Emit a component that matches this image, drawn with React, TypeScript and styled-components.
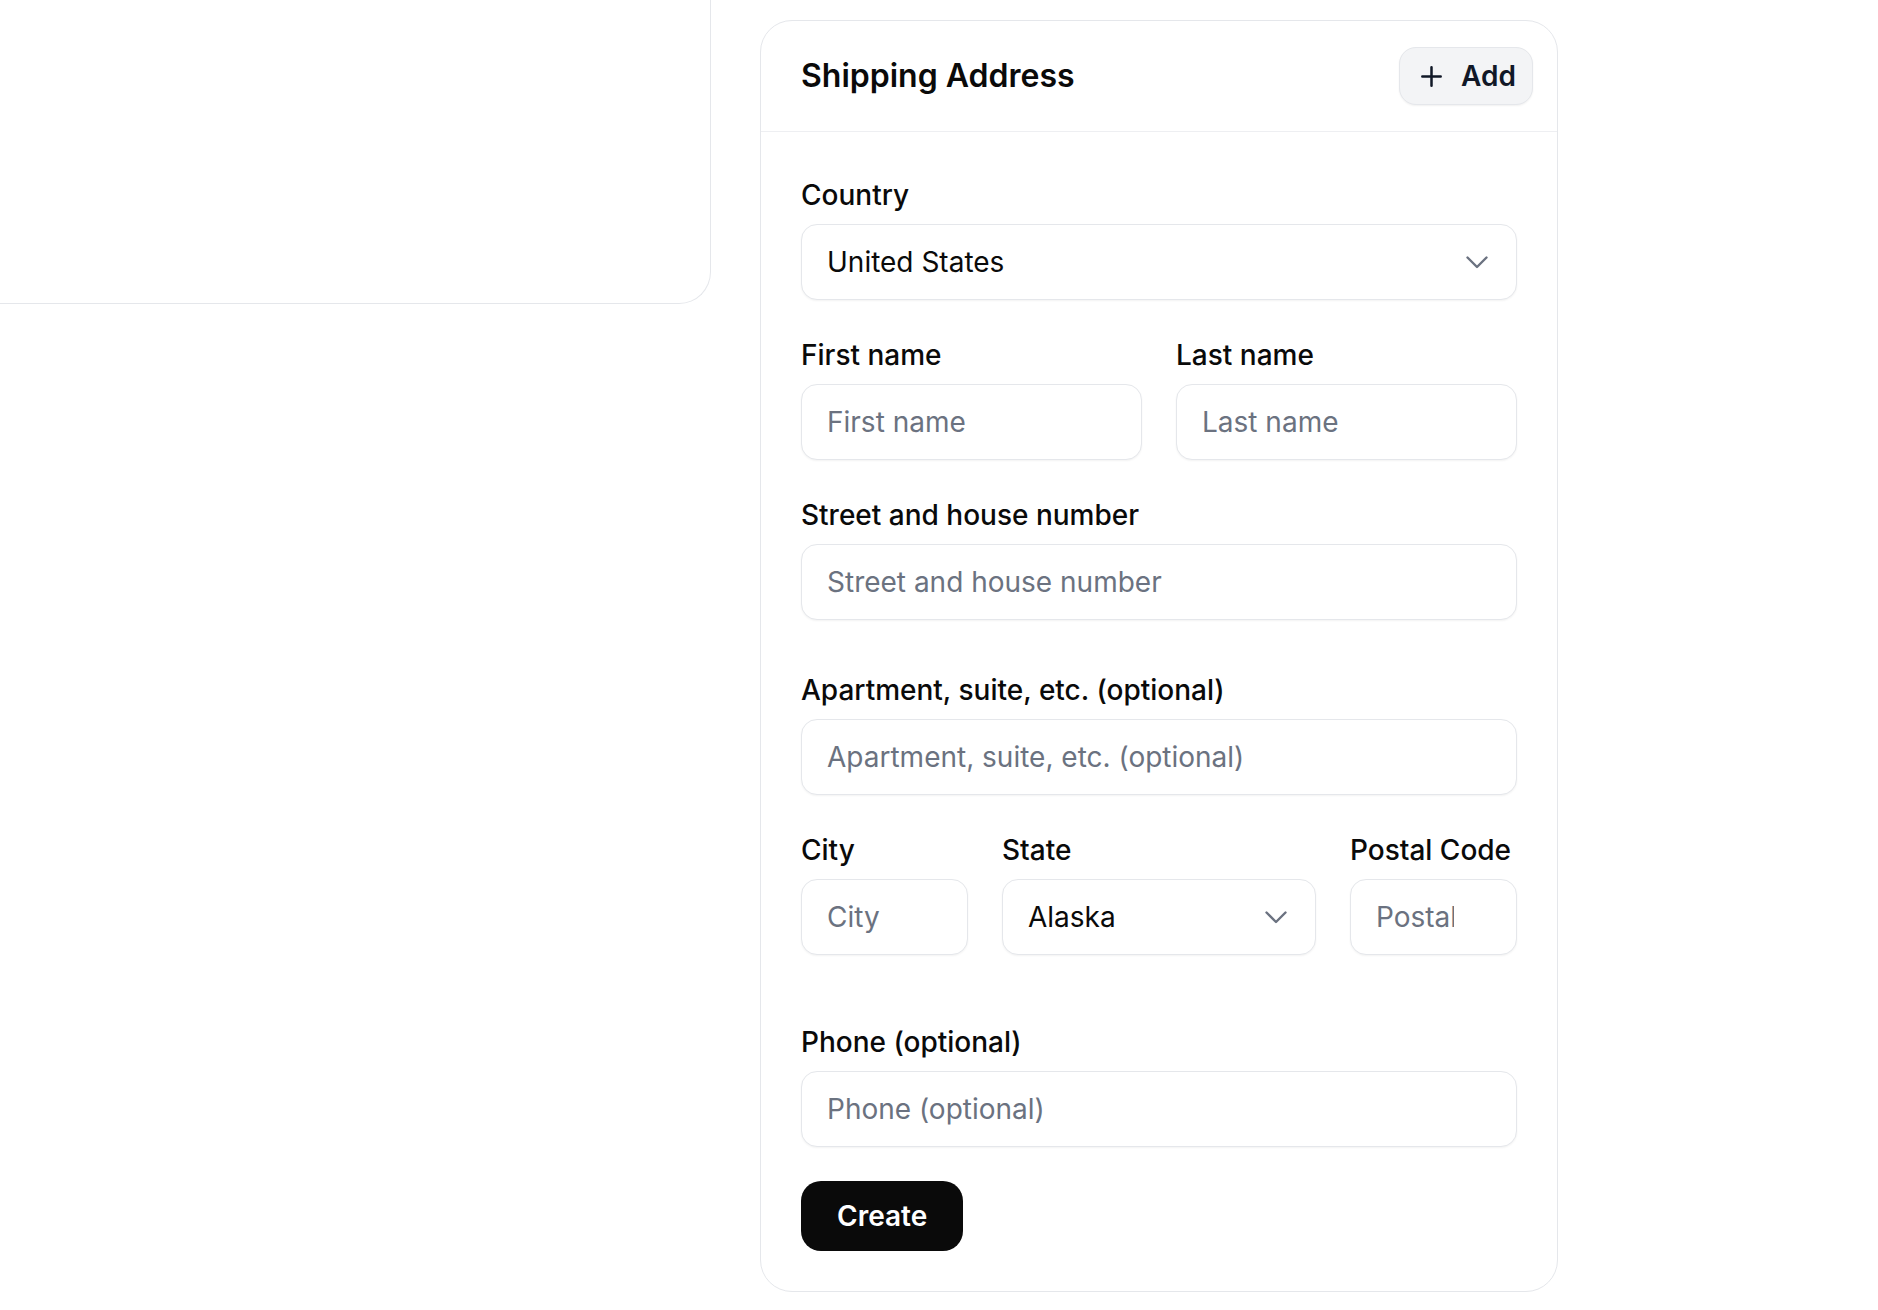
import React from "react";
import styled, { createGlobalStyle } from "styled-components";

const GlobalStyle = createGlobalStyle`
  html, body {
    margin: 0;
    padding: 0;
    background: #ffffff;
  }
  body {
    font-family: "Inter", "Noto Sans", "Liberation Sans", sans-serif;
    color: #0a0a0a;
  }
  * { box-sizing: border-box; }
`;

const Page = styled.div`
  display: flex;
  align-items: flex-start;
  gap: 49px;
  width: 1878px;
  min-height: 1310px;
`;

const LeftPanel = styled.section`
  width: 711px;
  height: 304px;
  flex: none;
  border-right: 1px solid #e5e7eb;
  border-bottom: 1px solid #e5e7eb;
  border-bottom-right-radius: 32px;
  background: #ffffff;
`;

const Card = styled.section`
  width: 798px;
  flex: none;
  margin-top: 20px;
  border: 1px solid #e5e7eb;
  border-radius: 32px;
  background: #ffffff;
`;

const CardHeader = styled.header`
  display: flex;
  align-items: center;
  justify-content: space-between;
  height: 111px;
  padding: 0 24px 0 40px;
  border-bottom: 1px solid #eeeff2;
`;

const Title = styled.h2`
  margin: 0;
  font-size: 32px;
  line-height: 1;
  font-weight: 600;
  color: #0a0a0a;
`;

const AddButton = styled.button`
  display: inline-flex;
  align-items: center;
  gap: 19px;
  height: 58px;
  padding: 0 16px 0 21px;
  border: 1px solid #e5e7eb;
  border-radius: 17px;
  background: #f3f4f6;
  box-shadow: 0 1px 2px rgba(0, 0, 0, 0.06);
  font-family: inherit;
  font-size: 28px;
  font-weight: 600;
  color: #111827;
  cursor: pointer;
`;

const CardBody = styled.form`
  display: flex;
  flex-direction: column;
  gap: 34px;
  padding: 42px 40px 40px;
`;

const Field = styled.div<{ $extra?: number }>`
  display: flex;
  flex-direction: column;
  min-width: 0;
  margin-top: ${(p) => p.$extra ?? 0}px;
`;

const Label = styled.label`
  display: block;
  font-size: 28px;
  line-height: 42px;
  font-weight: 500;
  color: #0a0a0a;
  margin-bottom: 8px;
  white-space: nowrap;
`;

const Row = styled.div<{ $cols: string }>`
  display: grid;
  grid-template-columns: ${(p) => p.$cols};
  column-gap: 34px;
`;

const TextInput = styled.input<{ $padRight?: number }>`
  width: 100%;
  height: 76px;
  padding: 0 ${(p) => p.$padRight ?? 25}px 0 25px;
  border: 1px solid #e5e7eb;
  border-radius: 16px;
  background: #ffffff;
  box-shadow: 0 1px 2px rgba(0, 0, 0, 0.05);
  font-family: inherit;
  font-size: 28px;
  color: #0a0a0a;
  outline: none;
  &::placeholder {
    color: #6b7280;
    opacity: 1;
  }
`;

const SelectTrigger = styled.button`
  display: flex;
  align-items: center;
  justify-content: space-between;
  width: 100%;
  height: 76px;
  padding: 0 28px 0 25px;
  border: 1px solid #e5e7eb;
  border-radius: 16px;
  background: #ffffff;
  box-shadow: 0 1px 2px rgba(0, 0, 0, 0.05);
  font-family: inherit;
  font-size: 28px;
  font-weight: 400;
  color: #0a0a0a;
  text-align: left;
  cursor: pointer;
`;

const SelectValue = styled.span`
  white-space: nowrap;
  overflow: hidden;
`;

const CreateButton = styled.button`
  align-self: flex-start;
  height: 70px;
  padding: 0 36px;
  border: none;
  border-radius: 20px;
  background: #0a0a0a;
  color: #ffffff;
  font-family: inherit;
  font-size: 28px;
  font-weight: 600;
  cursor: pointer;
`;

const PlusIcon = () => (
  <svg width="21" height="21" viewBox="0 0 21 21" fill="none" aria-hidden="true">
    <path d="M10.5 1.3v18.4M1.3 10.5h18.4" stroke="#111827" strokeWidth="2.5" strokeLinecap="round" />
  </svg>
);

const ChevronDown = () => (
  <svg width="22" height="13" viewBox="0 0 22 13" fill="none" aria-hidden="true">
    <path d="M1.5 1.5l9.5 9.5 9.5-9.5" stroke="#6b7280" strokeWidth="2.4" strokeLinecap="round" strokeLinejoin="round" />
  </svg>
);

const Select = ({ value }: { value: string }) => (
  <SelectTrigger type="button">
    <SelectValue>{value}</SelectValue>
    <ChevronDown />
  </SelectTrigger>
);

export default function App() {
  return (
    <>
      <GlobalStyle />
      <Page>
        <LeftPanel />
        <Card>
          <CardHeader>
            <Title>Shipping Address</Title>
            <AddButton type="button">
              <PlusIcon />
              Add
            </AddButton>
          </CardHeader>
          <CardBody onSubmit={(e) => e.preventDefault()}>
            <Field>
              <Label>Country</Label>
              <Select value="United States" />
            </Field>
            <Row $cols="1fr 1fr">
              <Field>
                <Label>First name</Label>
                <TextInput placeholder="First name" />
              </Field>
              <Field>
                <Label>Last name</Label>
                <TextInput placeholder="Last name" />
              </Field>
            </Row>
            <Field>
              <Label>Street and house number</Label>
              <TextInput placeholder="Street and house number" />
            </Field>
            <Field $extra={15}>
              <Label>Apartment, suite, etc. (optional)</Label>
              <TextInput placeholder="Apartment, suite, etc. (optional)" />
            </Field>
            <Row $cols="167px 1fr 167px">
              <Field>
                <Label>City</Label>
                <TextInput placeholder="City" />
              </Field>
              <Field>
                <Label>State</Label>
                <Select value="Alaska" />
              </Field>
              <Field>
                <Label>Postal Code</Label>
                <TextInput placeholder="Postal Code" $padRight={62} />
              </Field>
            </Row>
            <Field $extra={32}>
              <Label>Phone (optional)</Label>
              <TextInput placeholder="Phone (optional)" />
            </Field>
            <CreateButton type="submit">Create</CreateButton>
          </CardBody>
        </Card>
      </Page>
    </>
  );
}
